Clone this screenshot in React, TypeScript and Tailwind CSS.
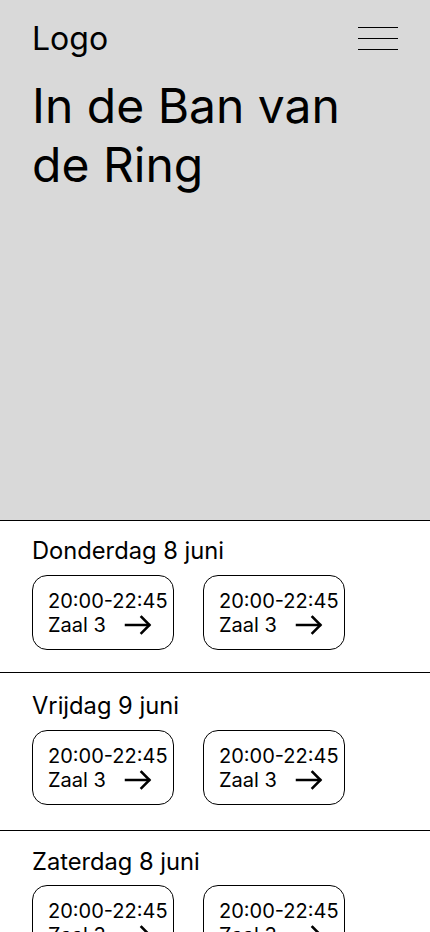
const days = [
  { label: "Donderdag 8 juni", pt: "pt-[15px]", gap: "mt-[9px]", pb: "pb-[22px]" },
  { label: "Vrijdag 9 juni", pt: "pt-[18px]", gap: "mt-[9px]", pb: "pb-[25px]" },
  { label: "Zaterdag 8 juni", pt: "pt-[16px]", gap: "mt-[8px]", pb: "pb-[22px]" },
];

function Arrow() {
  return (
    <svg width="28" height="20" viewBox="0 0 28 20" fill="none" stroke="black" strokeWidth="2.5" strokeLinecap="square">
      <path d="M2 10H25" />
      <path d="M17.5 2L25.5 10L17.5 18" />
    </svg>
  );
}

function ShowCard() {
  return (
    <a href="#" className="block w-[142px] h-[75px] rounded-[15px] border border-black pl-[15px] pt-[13px] text-[20px] leading-[24px] text-black">
      <div>20:00-22:45</div>
      <div className="flex items-center gap-[18px]">
        <span>Zaal 3</span>
        <Arrow />
      </div>
    </a>
  );
}

export default function App() {
  return (
    <div className="min-h-[932px] bg-white text-black" style={{ fontFamily: "Inter, 'Noto Sans', sans-serif" }}>
      <header className="h-[520px] bg-[#d9d9d9] px-8 pt-[19px]">
        <div className="flex items-start justify-between">
          <span className="text-[32px] leading-[40px]">Logo</span>
          <button className="mt-[8px] flex w-10 flex-col gap-[10px]" aria-label="Menu">
            <span className="block h-px w-10 bg-black" />
            <span className="block h-px w-10 bg-black" />
            <span className="block h-px w-10 bg-black" />
          </button>
        </div>
        <h1 className="mt-[17px] text-[48px] leading-[59px]">
          In de Ban van
          <br />
          de Ring
        </h1>
      </header>

      {days.map((day) => (
        <section key={day.label} className={`border-t border-black px-8 ${day.pt} ${day.pb}`}>
          <h2 className="text-[23.7px] leading-[30px]">{day.label}</h2>
          <div className={`${day.gap} flex gap-[29px]`}>
            <ShowCard />
            <ShowCard />
          </div>
        </section>
      ))}
    </div>
  );
}
